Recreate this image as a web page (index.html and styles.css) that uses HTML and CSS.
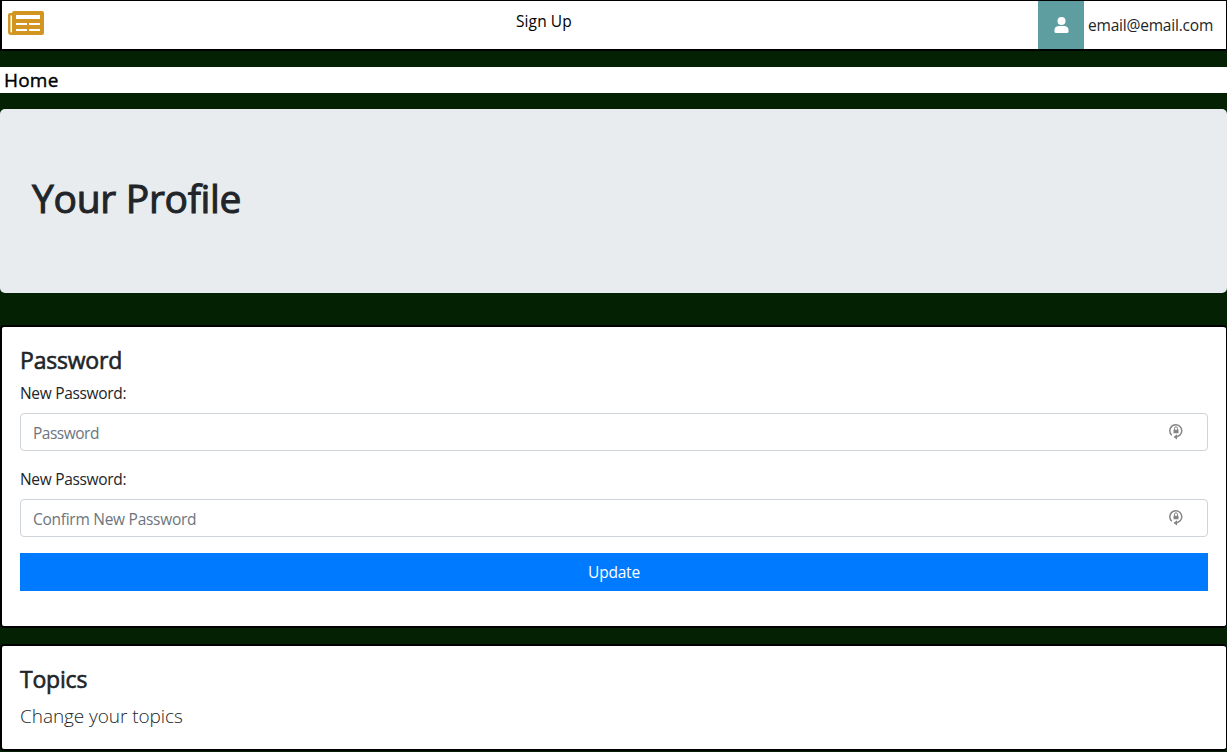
FILE: index.html
```
<!DOCTYPE html>
<html lang="en">
<head>
<meta charset="utf-8">
<title>Your Profile</title>
<link rel="stylesheet" href="styles.css">
</head>
<body>
<header class="topbar">
  <a class="brand" href="#" aria-label="News">
    <svg class="brand-icon" viewBox="0 0 36 24"><path fill="#d39522" fill-rule="evenodd" d="M6 0H34Q36 0 36 2V22Q36 24 34 24H3Q0 24 0 21V4Q0 2 2 2H4V2Q4 0 6 0ZM2.5 4.5V20.5Q2.5 21.5 3.3 21.5Q4 21.5 4 20.5V4.500ZM8 4V8H32V4ZM8 12V14H19V12ZM21 12V14H32V12ZM8 18V20H19V18ZM21 18V20H32V18Z"/></svg>
  </a>
  <a class="signup" href="#"><span class="signup-text">Sign Up</span></a>
  <div class="account">
    <span class="avatar"><svg class="avatar-icon" viewBox="0 0 14 16"><circle cx="7" cy="4" r="4" fill="#fff"/><path fill="#fff" d="M4 9H10Q14 9.500 14 13V14.500Q14 16 12.500 16H1.500Q0 16 0 14.500V13Q0 9.500 4 9Z"/></svg></span>
    <span class="email">email@email.com</span>
  </div>
</header>
<nav class="crumb"><span class="crumb-text">Home</span></nav>
<section class="hero"><h1 class="hero-title">Your Profile</h1></section>
<main>
  <section class="card card-password">
    <h2 class="card-title title-password">Password</h2>
    <form>
      <label class="label" for="p1">New Password:</label>
      <div class="field">
        <input class="input input-first" id="p1" type="password" placeholder="Password">
        <svg class="lock" viewBox="0 0 14 17"><path fill="none" stroke="#858585" stroke-width="1.500" d="M2.800 12.200A6 6 0 1 1 11 12L8 13.800"/><path fill="#858585" d="M8 11.200V16.500L4.500 13.900ZM4.500 6.700H9.500V10.300H4.500Z"/><path fill="none" stroke="#858585" d="M5.500 7V5.300a1.500 1.500 0 0 1 3 0V7"/></svg>
      </div>
      <label class="label" for="p2">New Password:</label>
      <div class="field">
        <input class="input input-second" id="p2" type="password" placeholder="Confirm New Password">
        <svg class="lock" viewBox="0 0 14 17"><path fill="none" stroke="#858585" stroke-width="1.500" d="M2.800 12.200A6 6 0 1 1 11 12L8 13.800"/><path fill="#858585" d="M8 11.200V16.500L4.500 13.900ZM4.500 6.700H9.500V10.300H4.500Z"/><path fill="none" stroke="#858585" d="M5.500 7V5.300a1.500 1.500 0 0 1 3 0V7"/></svg>
      </div>
      <button class="update" type="button"><span class="update-text">Update</span></button>
    </form>
  </section>
  <section class="card card-topics">
    <h2 class="card-title title-topics">Topics</h2>
    <p class="lead">Change your topics</p>
  </section>
</main>
</body>
</html>
```
FILE: styles.css
```
* { box-sizing: border-box; }
body {
  margin: 0;
  height: 752px;
  overflow: hidden;
  background: #042104;
  color: #212529;
  font: 400 15.500px/24px "Open Sans", "Noto Sans", sans-serif;
}
h1, h2, p { margin: 0; }
a { color: #000; text-decoration: none; }
.topbar {
  display: grid;
  grid-template-columns: 508px 1fr auto;
  height: 51px;
  background: #fff;
  border: solid #000;
  border-width: 1px 1px 2px 2px;
}
.brand { padding: 10px 0 0 6px; }
.brand-icon { display: block; width: 36px; height: 24px; }
.signup { padding: 8px 0 0 6px; }
.signup-text { letter-spacing: 0.1px; }
.account { display: flex; align-items: center; width: 188px; }
.avatar {
  display: flex;
  align-items: center;
  justify-content: center;
  width: 46px;
  height: 48px;
  background: #5f9ea0;
}
.avatar-icon { width: 15px; height: 16px; }
.email { padding-left: 4px; letter-spacing: -0.2px; white-space: nowrap; }
.crumb {
  height: 26px;
  margin: 16px 0;
  padding-left: 4px;
  background: #fff;
  color: #000;
  font-size: 19px;
  line-height: 26px;
  letter-spacing: 0.2px;
  -webkit-text-stroke: 0.4px #000;
}
.hero {
  height: 184px;
  padding: 65px 32px;
  background: #e9ecef;
  border-radius: 5px;
}
.hero-title {
  font-size: 39px;
  font-weight: 400;
  line-height: 48px;
  letter-spacing: -0.3px;
  -webkit-text-stroke: 1px #212529;
}
.card {
  background: #fff;
  border: solid #000;
  border-width: 2px 1px 2px 2px;
  border-radius: 4px;
  padding: 19px 18px 0;
}
.card-password { height: 303px; margin-top: 32px; }
.card-topics { height: 107px; margin-top: 16px; }
.card-title {
  margin-bottom: 6px;
  font-size: 23px;
  font-weight: 400;
  line-height: 29px;
  letter-spacing: -0.2px;
  -webkit-text-stroke: 0.6px #212529;
}
.label { display: block; height: 24px; margin-bottom: 8px; letter-spacing: -0.32px; }
.field { position: relative; margin-bottom: 16px; }
.input {
  display: block;
  width: 100%;
  height: 38px;
  padding: 8px 12px 6px;
  border: 1px solid #ced4da;
  border-radius: 4px;
  background: #fff;
  font: inherit;
}
.input::placeholder { color: #6c757d; opacity: 1; }
.input-first { letter-spacing: -0.5px; }
.input-second { letter-spacing: -0.27px; }
.lock { position: absolute; top: 10px; right: 25px; width: 14px; height: 17px; }
.update {
  display: block;
  width: 100%;
  height: 38px;
  padding: 0;
  border: 0;
  background: #007bff;
  color: #fff;
  font: inherit;
  letter-spacing: -0.2px;
}
.lead { padding-top: 1px; font-size: 19px; font-weight: 300; line-height: 30px; letter-spacing: -0.06px; }
```
